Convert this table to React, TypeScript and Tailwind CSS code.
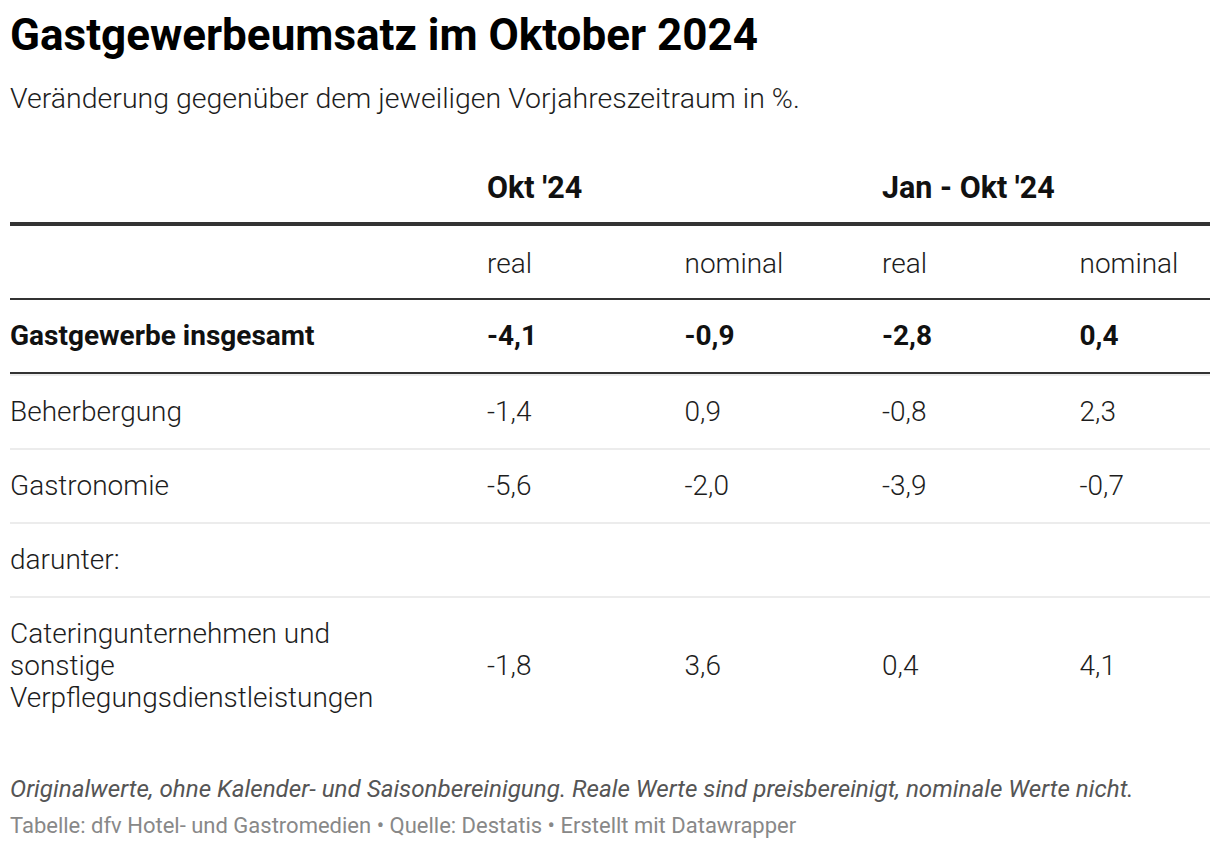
import React from "react";

const rows = [
  { label: "Beherbergung", v: ["-1,4", "0,9", "-0,8", "2,3"], first: true },
  { label: "Gastronomie", v: ["-5,6", "-2,0", "-3,9", "-0,7"], first: false },
  { label: "darunter:", v: ["", "", "", ""], first: false },
];

export default function App() {
  return (
    <div className="w-[1220px] h-[848px] bg-white px-[10px] text-[#1d1d1d]" style={{ fontFamily: "Roboto, sans-serif" }}>
      <h1 className="pt-[9px] text-[44px] leading-[52px] font-bold text-black">Gastgewerbeumsatz im Oktober 2024</h1>
      <p className="mt-[22px] text-[28.5px] leading-[32px] font-light text-[#1d1d1d]">Veränderung gegenüber dem jeweiligen Vorjahreszeitraum in %.</p>

      <div className="mt-[57px] grid grid-cols-[467px_197.5px_197.5px_197.5px_1fr] text-[28px] leading-[32px] font-light">
        {/* header */}
        <div className="border-b-[4px] border-[#333] pb-[18px]" />
        <div className="col-span-2 border-b-[4px] border-[#333] pb-[18px] pl-[10px] font-bold text-[#111] text-[30.5px]">Okt '24</div>
        <div className="col-span-2 border-b-[4px] border-[#333] pb-[18px] pl-[10px] font-bold text-[#111] text-[30.5px]">Jan - Okt '24</div>

        {/* subheader */}
        <div className="border-b-[2px] border-[#333] pt-[22px] pb-[18px]" />
        {["real", "nominal", "real", "nominal"].map((t, i) => (
          <div key={i} className="border-b-[2px] border-[#333] pt-[22px] pb-[18px] pl-[10px]">{t}</div>
        ))}

        {/* bold row */}
        <div className="border-b-[2px] border-[#333] py-[20px] font-bold text-[#111]">Gastgewerbe insgesamt</div>
        {["-4,1", "-0,9", "-2,8", "0,4"].map((t, i) => (
          <div key={i} className="border-b-[2px] border-[#333] py-[20px] pl-[10px] font-bold text-[#111]">{t}</div>
        ))}

        {rows.map((r) => (
          <React.Fragment key={r.label}>
            <div className={r.first ? "border-t-[2px] border-b-[2px] border-[#ececec] py-[20px]" : "border-b-[2px] border-[#ececec] py-[20px]"}>{r.label}</div>
            {r.v.map((t, i) => (
              <div key={i} className={r.first ? "border-t-[2px] border-b-[2px] border-[#ececec] py-[20px] pl-[10px]" : "border-b-[2px] border-[#ececec] py-[20px] pl-[10px]"}>{t}</div>
            ))}
          </React.Fragment>
        ))}

        <div className="py-[20px] pr-[60px]">Cateringunternehmen und sonstige Verpflegungsdienstleistungen</div>
        {["-1,8", "3,6", "0,4", "4,1"].map((t, i) => (
          <div key={i} className="py-[20px] pl-[10px] flex items-center">{t}</div>
        ))}
      </div>

      <p className="mt-[41px] text-[24.2px] leading-[28px] italic font-normal text-[#555]">Originalwerte, ohne Kalender- und Saisonbereinigung. Reale Werte sind preisbereinigt, nominale Werte nicht.</p>
      <p className="mt-[10px] text-[22px] leading-[26px] font-normal text-[#888]">Tabelle: dfv Hotel- und Gastromedien • Quelle: Destatis • Erstellt mit Datawrapper</p>
    </div>
  );
}
